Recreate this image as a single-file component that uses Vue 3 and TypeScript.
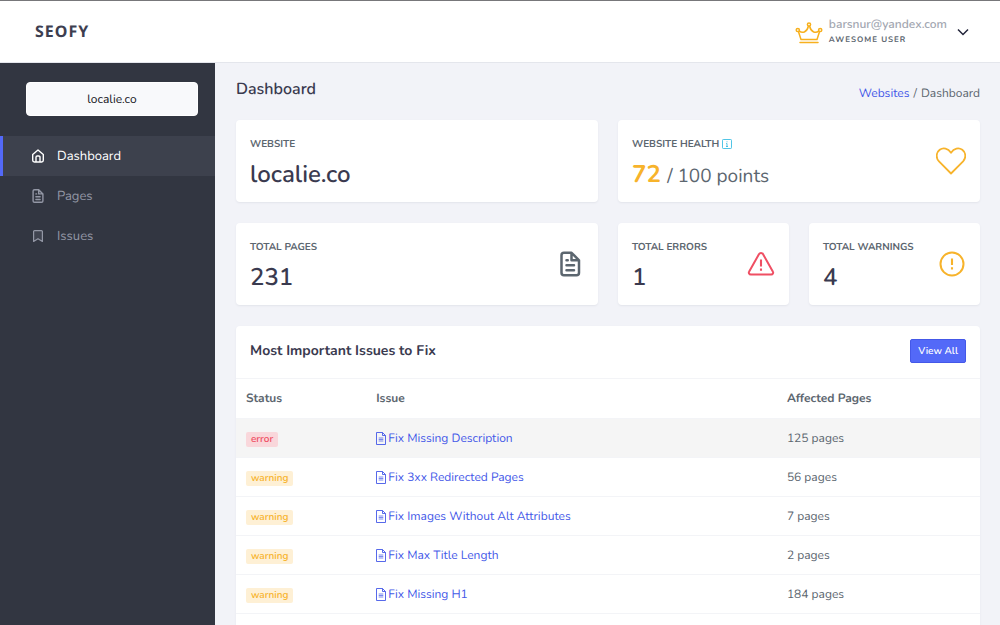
<script setup lang="ts">
interface Issue {
  status: 'error' | 'warning'
  title: string
  pages: number
}

const nav = [
  { label: 'Dashboard', icon: 'home', active: true },
  { label: 'Pages', icon: 'file', active: false },
  { label: 'Issues', icon: 'bookmark', active: false },
]

const issues: Issue[] = [
  { status: 'error', title: 'Fix Missing Description', pages: 125 },
  { status: 'warning', title: 'Fix 3xx Redirected Pages', pages: 56 },
  { status: 'warning', title: 'Fix Images Without Alt Attributes', pages: 7 },
  { status: 'warning', title: 'Fix Max Title Length', pages: 2 },
  { status: 'warning', title: 'Fix Missing H1', pages: 184 },
]

const filePath =
  'M9,10h1a1,1,0,0,0,0-2H9a1,1,0,0,0,0,2Zm0,2a1,1,0,0,0,0,2h6a1,1,0,0,0,0-2ZM20,8.94a1.31,1.31,0,0,0-.06-.27l0-.09a1.07,1.07,0,0,0-.19-.28h0l-6-6h0a1.07,1.07,0,0,0-.28-.19.32.32,0,0,0-.09,0A.88.88,0,0,0,13.05,2H7A3,3,0,0,0,4,5V19a3,3,0,0,0,3,3H17a3,3,0,0,0,3-3V9S20,9,20,8.94ZM14,5.41,16.59,8H14ZM18,19a1,1,0,0,1-1,1H7a1,1,0,0,1-1-1V5A1,1,0,0,1,7,4h5V9a1,1,0,0,0,1,1h5Zm-3-3H9a1,1,0,0,0,0,2h6a1,1,0,0,0,0-2Z'
</script>

<template>
  <div class="app">
    <header class="topbar">
      <a class="logo" href="#">SEOFY</a>
      <button class="user" type="button">
        <svg class="crown" viewBox="0 0 28 24" fill="none" stroke="currentColor" stroke-width="1.5" stroke-linejoin="round" stroke-linecap="round">
          <circle cx="2.8" cy="10" r="1.6" />
          <circle cx="14" cy="4.500" r="1.6" />
          <circle cx="25.2" cy="10" r="1.6" />
          <path d="M3.500 11.700 6 19.500h16l2.500-7.800M4.400 11c2.600 2.600 7.500 1.500 9-4.700M23.600 11c-2.600 2.600-7.500 1.500-9-4.700M5 22.500h18" />
        </svg>
        <span class="who">
          <span class="mail">barsnur@yandex.com</span>
          <span class="role">AWESOME USER</span>
        </span>
        <svg class="chevron" viewBox="0 0 12 8" fill="none" stroke="currentColor" stroke-width="1.5"><path d="m1 1.500 5 5 5-5" /></svg>
      </button>
    </header>

    <div class="body">
      <aside class="sidebar">
        <button class="site" type="button">localie.co</button>
        <nav>
          <a v-for="n in nav" :key="n.label" href="#" class="item" :class="{ active: n.active }">
            <svg v-if="n.icon === 'home'" viewBox="0 0 14 14" fill="none" stroke="currentColor" stroke-width="1.400" stroke-linejoin="round">
              <path d="M1.700 5.500 7 1l5.300 4.500v5.800a1.700 1.700 0 0 1-1.700 1.700H3.400a1.700 1.700 0 0 1-1.700-1.700zM5 13V8.200a1.200 1.200 0 0 1 1.200-1.200h1.600A1.200 1.200 0 0 1 9 8.200V13" />
            </svg>
            <svg v-else-if="n.icon === 'file'" viewBox="2 2 20 20"><path fill="currentColor" :d="filePath" /></svg>
            <svg v-else viewBox="0 0 14 14" fill="none" stroke="currentColor" stroke-width="1.200" stroke-linejoin="round">
              <path d="M3.600 1.600h6.800a1 1 0 0 1 1 1v9.800L7 9.700l-4.400 2.700V2.600a1 1 0 0 1 1-1z" fill="currentColor" fill-opacity=".15" />
            </svg>
            {{ n.label }}
          </a>
        </nav>
      </aside>

      <main class="content">
        <div class="heading">
          <h1>Dashboard</h1>
          <nav class="crumbs" aria-label="Breadcrumb">
            <a href="#">Websites</a><span>/</span><span>Dashboard</span>
          </nav>
        </div>

        <section class="grid">
          <article class="card wide">
            <div class="text">
              <h2>WEBSITE</h2>
              <p class="value">localie.co</p>
            </div>
          </article>

          <article class="card wide">
            <div class="text">
              <h2>
                WEBSITE HEALTH
                <svg class="info" viewBox="0 0 10 10" fill="none" stroke="currentColor">
                  <rect x=".5" y=".5" width="9" height="9" rx=".8" stroke-width=".8" />
                  <path d="M5 2.300v1M4.200 4.500H5v3M4 7.500h2" stroke-width=".8" />
                </svg>
              </h2>
              <p class="value"><span class="amber">72</span> <span class="rest">/ 100 points</span></p>
            </div>
            <svg class="icon amber" viewBox="0 0 30 30" fill="none" stroke="currentColor" stroke-width="1.800" stroke-linejoin="round">
              <path d="M15 27.500 3 15.300C-.6 11.500.4 6.300 3.700 3.800 7.200 1.200 12 2.200 15 6.700c3-4.500 7.800-5.500 11.300-2.900 3.300 2.500 4.300 7.700.8 11.500z" />
            </svg>
          </article>

          <article class="card wide">
            <div class="text">
              <h2>TOTAL PAGES</h2>
              <p class="value">231</p>
            </div>
            <svg class="icon gray" viewBox="-1 0 24 24"><path fill="currentColor" :d="filePath" /></svg>
          </article>

          <article class="card">
            <div class="text">
              <h2>TOTAL ERRORS</h2>
              <p class="value">1</p>
            </div>
            <svg class="icon red" viewBox="0 0 30 30" fill="none" stroke="currentColor" stroke-width="2" stroke-linejoin="round">
              <path d="M13.900 5.300 4.200 22.500a1.900 1.900 0 0 0 1.600 3h20.400a1.900 1.900 0 0 0 1.600-3L18.100 5.300c-1-1.800-3.200-1.800-4.200 0z" />
              <path d="M16 10.500v7M16 19.500v2.200" stroke-width="2.100" />
            </svg>
          </article>

          <article class="card">
            <div class="text">
              <h2>TOTAL WARNINGS</h2>
              <p class="value">4</p>
            </div>
            <svg class="icon amber" viewBox="0 0 30 30" fill="none" stroke="currentColor" stroke-width="2">
              <circle cx="16" cy="15" r="11.500" />
              <path d="M16 9.500V16M16 18.300v2.200" stroke-width="2.100" />
            </svg>
          </article>
        </section>

        <section class="panel">
          <div class="panel-head">
            <h2>Most Important Issues to Fix</h2>
            <button type="button">View All</button>
          </div>
          <table>
            <thead>
              <tr>
                <th class="c-status">Status</th>
                <th class="c-issue">Issue</th>
                <th>Affected Pages</th>
              </tr>
            </thead>
            <tbody>
              <tr v-for="(issue, i) in issues" :key="issue.title" :class="{ hover: i === 0 }">
                <td><span class="badge" :class="issue.status">{{ issue.status }}</span></td>
                <td>
                  <a href="#">
                    <svg class="doc" viewBox="0 0 10 13" fill="none" stroke="currentColor" stroke-width=".9">
                      <path d="M.5.500h6l3 3v9h-9zM6.500.500v3h3" />
                      <path d="M2.700 6h4.600M2.700 7.500h4.600M2.700 9h4.600" stroke-width=".7" />
                    </svg>{{ issue.title }}
                  </a>
                </td>
                <td>{{ issue.pages }} pages</td>
              </tr>
              <tr><td colspan="3"></td></tr>
            </tbody>
          </table>
        </section>
      </main>
    </div>
  </div>
</template>

<style>
body {
  margin: 0;
  overflow: hidden;
}
</style>

<style scoped>
* {
  box-sizing: border-box;
}
.app {
  height: 100vh;
  overflow: hidden;
  display: flex;
  flex-direction: column;
  font-family: Nunito, Lato, "Open Sans", sans-serif;
  font-size: 12px;
  line-height: 20px;
  text-rendering: geometricPrecision;
  color: #5c666f;
  background: #f2f3f8;
}
a {
  color: #4458e8;
  text-decoration: none;
}
button {
  font: inherit;
  text-rendering: inherit;
  cursor: pointer;
}
h1,
h2,
p {
  margin: 0;
}
.topbar {
  flex: none;
  height: 63px;
  display: flex;
  align-items: center;
  justify-content: space-between;
  padding: 0 31px 0 35px;
  background: #fff;
  border-top: 1px solid #77777a;
  border-bottom: 1px solid #e4e6ec;
}
.logo {
  padding-bottom: 2px;
  font: bold 16px/20px "Noto Sans", sans-serif;
  letter-spacing: 1px;
  color: #3d3e50;
}
.user {
  display: flex;
  align-items: center;
  padding: 0;
  border: 0;
  background: none;
  text-align: left;
}
.crown {
  width: 28px;
  height: 24px;
  margin-right: 6px;
  color: #f7b01e;
}
.who {
  display: flex;
  flex-direction: column;
}
.mail {
  font-weight: 600;
  line-height: 16px;
  color: #a3a7b1;
}
.role {
  font-size: 8px;
  font-weight: 700;
  line-height: 14px;
  letter-spacing: 1px;
  color: #5c666f;
}
.chevron {
  width: 12px;
  height: 8px;
  margin-left: 10px;
  color: #22243a;
}
.body {
  flex: 1;
  display: flex;
  min-height: 0;
}
.sidebar {
  flex: none;
  width: 215px;
  background: #323641;
}
.site {
  display: block;
  width: 172px;
  height: 34px;
  margin: 19px 0 20px 26px;
  padding: 2px 0 0;
  border: 1px solid #fff;
  border-radius: 4px;
  background: #f8f9fb;
  color: #15161c;
}
.item {
  display: flex;
  align-items: center;
  gap: 12px;
  height: 40px;
  padding-left: 28px;
  border-left: 3px solid transparent;
  font-size: 13px;
  color: #9397a5;
}
.item svg {
  width: 14px;
  height: 14px;
}
.item.active {
  color: #fff;
  background: #3d414d;
  border-color: #5369f8;
}
.content {
  flex: 1;
  min-width: 0;
  padding: 16px 20px 0 21px;
}
.heading {
  display: flex;
  justify-content: space-between;
  height: 41px;
}
.heading h1 {
  font-size: 16px;
  font-weight: 600;
  line-height: 20px;
  color: #3a3a4f;
}
.crumbs {
  display: flex;
  gap: 4px;
  padding-top: 5px;
}
.grid {
  display: grid;
  grid-template-columns: repeat(4, minmax(0, 1fr));
  gap: 21px 20px;
}
.card,
.panel {
  background: #fff;
  border-radius: 4px;
  box-shadow: 0 1px 2px #e2e4eb;
}
.card {
  display: flex;
  align-items: center;
  justify-content: space-between;
  height: 82px;
  padding: 0 14px;
}
.text {
  padding-top: 3px;
}
.wide {
  grid-column: span 2;
}
.card h2 {
  display: flex;
  align-items: center;
  gap: 3px;
  font-size: 10px;
  font-weight: 700;
  line-height: 16px;
  white-space: nowrap;
}
.value {
  padding-top: 9px;
  font-size: 24px;
  font-weight: 600;
  line-height: 28px;
  color: #3a3a4f;
}
.value .amber {
  font-weight: 700;
}
.rest {
  font-size: 19px;
  font-weight: 400;
  line-height: 20px;
  color: #5c666f;
}
.info {
  width: 10px;
  height: 10px;
  color: #25b6e0;
}
.icon {
  flex: none;
  width: 30px;
  height: 30px;
}
.amber {
  color: #f7b32b;
}
.red {
  color: #ef4f63;
}
.gray {
  color: #5c666f;
}
.panel {
  margin-top: 21px;
}
.panel-head {
  display: flex;
  align-items: flex-start;
  justify-content: space-between;
  height: 52px;
  padding: 13px 14px 0;
}
.panel-head h2 {
  padding-top: 2px;
  font-size: 14px;
  font-weight: 700;
  line-height: 20px;
  color: #3a3a4f;
}
.panel-head button {
  height: 24px;
  padding: 0 7px;
  border: 1px solid #4458e8;
  border-radius: 2px;
  background: #5369f8;
  color: #fff;
  font-size: 10px;
  font-weight: 600;
}
table {
  width: 100%;
  border-collapse: collapse;
  table-layout: fixed;
}
th,
td {
  height: 39px;
  padding: 0 10px;
  border-top: 1px solid #f3f4f7;
  text-align: left;
}
th {
  height: 40px;
  font-weight: 700;
}
td {
  padding-top: 2px;
}
.c-status {
  width: 17.5%;
}
.c-issue {
  width: 55.2%;
}
.hover td {
  background: #f5f5f5;
}
.badge {
  display: inline-block;
  padding: 0 5px;
  border-radius: 2px;
  font-size: 10px;
  font-weight: 600;
  line-height: 15px;
}
.error {
  background: #f9d7db;
  color: #ef4f63;
}
.warning {
  background: #fef0d5;
  color: #f7b32b;
}
td a {
  display: flex;
  align-items: center;
  gap: 2px;
}
.doc {
  width: 10px;
  height: 13px;
  margin-bottom: 2px;
}
</style>
